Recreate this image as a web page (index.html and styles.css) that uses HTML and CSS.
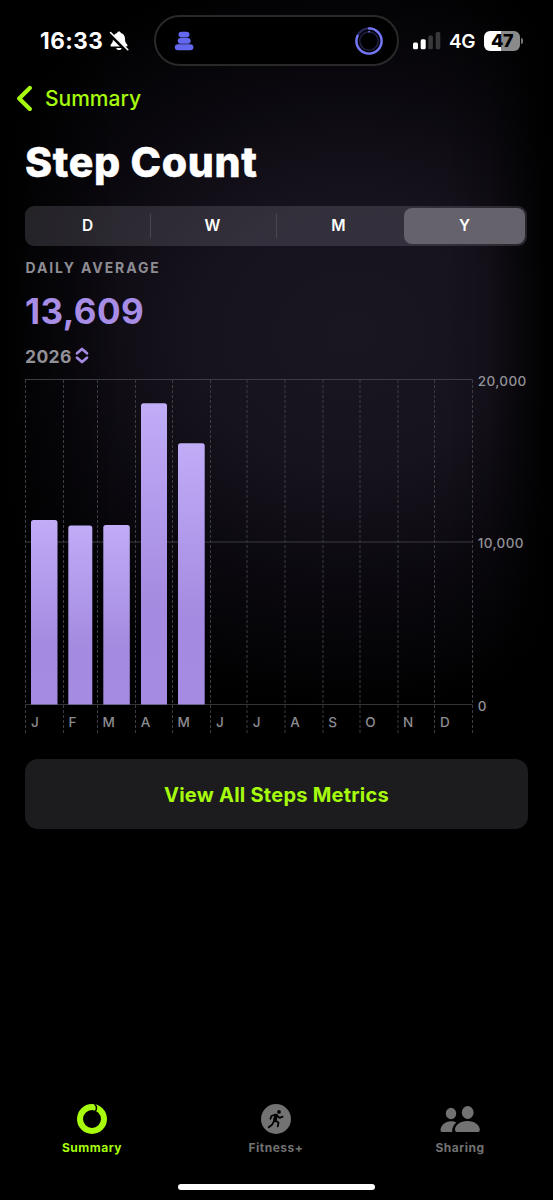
FILE: index.html
```html
<!DOCTYPE html>
<html lang="en">
<head>
<meta charset="utf-8">
<title>Step Count</title>
<link rel="stylesheet" href="styles.css">
</head>
<body>
<div class="screen">
  <header class="status">
    <div class="clock">
      <span class="time">16:33</span>
      <svg class="bell" width="20" height="20" viewBox="0 0 20 20">
        <path d="M10 .5c-1 0-1.800.7-1.900 1.600C5.500 2.900 4 5 4 7.800c0 3.400-.7 4.200-2.100 5.600-.8.8-.5 2.100.8 2.100h14.600c1.300 0 1.600-1.300.8-2.100C16.700 12 16 11.200 16 7.800c0-2.800-1.500-4.900-4.100-5.700C11.800 1.200 11 .5 10 .5zM7.300 16.900h5.400c-.2 1.300-1.300 2.200-2.700 2.200s-2.500-.9-2.700-2.200z" fill="#fff"/>
        <path d="M0 2.200 17.500 19.600" stroke="#000" stroke-width="3.600"/>
        <path d="M1.500 1.500 18.800 18.700" stroke="#fff" stroke-width="1.600" stroke-linecap="round"/>
      </svg>
    </div>
    <div class="island">
      <svg width="20" height="20" viewBox="0 0 20 20" fill="#6468ee">
        <rect x="4.500" y="0.800" width="11" height="5.600" rx="2.800"/>
        <rect x="3.700" y="6.900" width="13" height="5.800" rx="2.900"/>
        <rect x="0.800" y="13.200" width="18.600" height="6" rx="3"/>
      </svg>
      <svg width="28" height="30" viewBox="1 0 28 30" fill="none">
        <circle cx="15" cy="15" r="12.600" stroke="#27275c" stroke-width="2.300"/>
        <circle cx="15" cy="15" r="12.600" stroke="#7476f5" stroke-width="2.400" stroke-dasharray="64.500 80" transform="rotate(-90 15 15)" stroke-linecap="round"/>
        <circle cx="15" cy="15" r="9.300" stroke="#20204a" stroke-width="1.500"/>
        <circle cx="15.200" cy="5.700" r=".9" fill="#7476f5"/>
      </svg>
    </div>
    <div class="signals">
      <svg width="28" height="18" viewBox="0 0 28 18">
        <rect x="0" y="10.500" width="5" height="6.700" rx="1.500" fill="#fff"/>
        <rect x="7.700" y="7.200" width="5" height="10" rx="1.500" fill="#fff"/>
        <rect x="15.300" y="3.500" width="4.600" height="13.700" rx="1.500" fill="#38383a"/>
        <rect x="22.700" y="0" width="4.600" height="17.200" rx="1.500" fill="#38383a"/>
      </svg>
      <span class="network">4G</span>
      <span class="battery">47</span><i class="battery-tip"></i>
    </div>
  </header>

  <nav class="back">
    <svg width="17" height="26" viewBox="0 0 17 26" fill="none" stroke="#a6fc0c" stroke-width="4.200" stroke-linecap="round" stroke-linejoin="round"><path d="M14.800 3 4.200 13.500l10.600 10.500"/></svg>
    <span>Summary</span>
  </nav>

  <main>
    <h1>Step Count</h1>
    <div class="segments">
      <span>D</span><span>W</span><span>M</span><span class="selected">Y</span>
    </div>
    <div class="label">DAILY AVERAGE</div>
    <div class="average">13,609</div>
    <div class="year"><span>2026</span>
      <svg width="14" height="18" viewBox="0 0 14 18" fill="none" stroke="#a58be2" stroke-width="2.700" stroke-linecap="round" stroke-linejoin="round"><path d="M2 6.300 7 2l5 4.300M2 10.700l5 4.300 5-4.300"/></svg>
    </div>

    <svg class="chart" width="528" height="366" viewBox="0 0 528 366">
      <defs>
        <linearGradient id="bar" x1="0" y1="0" x2="0" y2="1">
          <stop offset="0" stop-color="#c0acf7"/><stop offset=".68" stop-color="#a48ae0"/><stop offset="1" stop-color="#a58be2"/>
        </linearGradient>
      </defs>
      <g class="rules">
        <path d="M0 9.500h447.500"/><path d="M0 172h447.500"/><path class="base" d="M0 334.500h447.500"/>
      </g>
      <path class="months" d="M.5 10v355M38.500 10v355M72.500 10v355M110.500 10v355M147.500 10v355M185.500 10v355M222 10v355M260 10v355M298 10v355M335 10v355M373 10v355M409.500 10v355M447.500 10v355"/>
      <g fill="url(#bar)">
        <path d="M6 334.500V152.500q0-2.500 2.500-2.500h21.500q2.500 0 2.500 2.500V334.500z"/>
        <path d="M43.300 334.500V158q0-2.500 2.500-2.500h19q2.500 0 2.500 2.500V334.500z"/>
        <path d="M78.300 334.500V157.500q0-2.500 2.500-2.500h21.500q2.500 0 2.500 2.500V334.500z"/>
        <path d="M116 334.500V35.800q0-2.500 2.500-2.500h21q2.500 0 2.500 2.500V334.500z"/>
        <path d="M153 334.500V75.800q0-2.500 2.500-2.500h21.700q2.500 0 2.500 2.500V334.500z"/>
      </g>
      <g class="axis">
        <text x="6" y="357.300">J</text><text x="43.500" y="357.300">F</text><text x="77.500" y="357.300">M</text><text x="115.800" y="357.300">A</text><text x="152.500" y="357.300">M</text><text x="191" y="357.300">J</text><text x="227.700" y="357.300">J</text><text x="265.300" y="357.300">A</text><text x="303.200" y="357.300">S</text><text x="340.200" y="357.300">O</text><text x="378" y="357.300">N</text><text x="415" y="357.300">D</text>
      </g>
      <g class="values">
        <text x="452.700" y="15.500">20,000</text><text x="452.700" y="178">10,000</text><text x="452.700" y="340.500">0</text>
      </g>
    </svg>

    <button class="metrics">View All Steps Metrics</button>
  </main>

  <footer class="tabs">
    <div class="tab active">
      <svg width="42" height="32" viewBox="0 0 42 32" fill="none">
        <circle cx="21" cy="16" r="12" stroke="#a6fc0c" stroke-width="6"/>
        <path d="M23.500 1Q27.200 4.500 24 9" stroke="#000" stroke-width="1.400"/>
      </svg>
      <span>Summary</span>
    </div>
    <div class="tab">
      <svg width="42" height="32" viewBox="0 0 42 32" fill="none">
        <circle cx="21" cy="16" r="15" fill="#727272"/>
        <g transform="translate(.7 .6)">
          <circle cx="23.300" cy="8.300" r="1.900" fill="#000"/>
          <path d="m20.400 12-1.300 4.800" stroke="#000" stroke-width="3.700" stroke-linecap="round"/>
          <path d="m19.500 11-3.800 1.400-.9 2.800M21.500 12l2.400 2.300 3-1.200M19.500 16.800l3.300 2.200-.7 3.700M18 18l-1.700 3.200-3.300 2.500" stroke="#000" stroke-width="1.800" stroke-linecap="round" stroke-linejoin="round"/>
        </g>
      </svg>
      <span>Fitness+</span>
    </div>
    <div class="tab">
      <svg width="42" height="32" viewBox="0 0 42 32" fill="#727272">
        <ellipse cx="12" cy="10.500" rx="5.200" ry="5.700"/>
        <path d="M1.500 27.300C1.500 22.700 6 18.300 12 18.300c2.100 0 3.900.5 5.300 1.300-2.500 2.200-4.400 5-4.100 9.400H3Q1.500 29 1.500 27.300z"/>
        <ellipse cx="28.700" cy="9.500" rx="5.900" ry="6.500"/>
        <path d="M16 26.700c0-4.200 5-8.600 12.400-8.600s12.400 4.400 12.400 8.600c0 1.700-.8 2.300-2.400 2.300h-20c-1.600 0-2.400-.6-2.400-2.300z"/>
      </svg>
      <span>Sharing</span>
    </div>
  </footer>
  <div class="home"></div>
</div>
</body>
</html>
```
FILE: styles.css
```css
* { box-sizing: border-box; }
body { margin: 0; background: #000; font-family: Inter, "Liberation Sans", sans-serif; }
.screen {
  width: 553px; height: 1200px; overflow: hidden;
  display: flex; flex-direction: column;
  background:
    linear-gradient(90deg, #000 0, rgba(0, 0, 0, .55) 35px, transparent 120px, transparent 445px, rgba(0, 0, 0, .2) 490px, rgba(0, 0, 0, .75) 530px, #000 553px),
    radial-gradient(ellipse 440px 375px at 350px 335px, #191521 0, #17131e 35%, #0a080e 68%, #000 100%),
    #000;
}
svg { display: block; flex: none; }
.status { height: 81px; display: flex; align-items: flex-start; color: #fff; }
.clock { width: 154px; padding: 27px 0 0 40px; display: flex; gap: 4px; }
.time { width: 65px; font-size: 22.500px; line-height: 28px; font-weight: 700; letter-spacing: .5px; white-space: nowrap; }
.bell { margin-top: 4px; }
.island {
  width: 245px; height: 51px; margin-top: 15px; padding: 0 14px 0 18px;
  border: 2px solid #29292a; border-radius: 26px; background: #000;
  display: flex; align-items: center; justify-content: space-between;
}
.signals { display: flex; align-items: center; margin: 27px 0 0 14px; height: 28px; }
.signals svg { margin-top: -1px; }
.network { width: 35px; margin-left: 8px; font-size: 19px; font-weight: 600; letter-spacing: -.3px; }
.battery {
  width: 36px; height: 20px; border-radius: 6px; color: #000;
  background: linear-gradient(90deg, #fff 48%, #8a8a8b 48%);
  font-size: 18px; line-height: 20px; font-weight: 800; text-align: center; letter-spacing: -.4px;
}
.battery-tip { width: 2px; height: 6px; margin-left: 1px; border-radius: 0 2px 2px 0; background: #77777a; }
.back { height: 56px; padding: 4px 0 0 15px; display: flex; gap: 13px; color: #a6fc0c; font-size: 21px; line-height: 28px; font-weight: 500; }
main { padding-left: 25px; height: 963px; }
h1 { margin: 0; height: 68.500px; color: #fff; font-size: 41px; line-height: 50px; font-weight: 800; letter-spacing: .7px; -webkit-text-stroke: .5px #fff; }
.segments { width: 502px; height: 40px; padding: 2px; border-radius: 9px; display: grid; grid-template-columns: 124px 126px 126px 122px; background: rgba(120, 118, 130, .29); }
.segments span { position: relative; padding-right: 3px; color: #fff; font-size: 15.500px; line-height: 36px; font-weight: 600; text-align: center; }
.segments span:nth-child(-n+2)::after { content: ""; position: absolute; right: 0; top: 6px; width: 1px; height: 24px; background: #4a4850; }
.segments .selected { height: 36px; margin-left: 1px; padding-right: 0; border-radius: 8px; background: #65626c; }
.label { height: 42px; padding: 12px 0 0 .5px; color: #8e8d94; font-size: 14px; line-height: 20px; font-weight: 700; letter-spacing: 1.900px; }
.average { height: 56px; color: #a88de6; font-size: 35px; line-height: 46px; font-weight: 700; letter-spacing: .4px; }
.year { height: 26.500px; display: flex; gap: 3px; color: #929197; font-size: 17.500px; line-height: 25px; font-weight: 700; letter-spacing: .4px; }
.year svg { margin-top: 3px; }
.rules path { stroke: #3d3b43; stroke-width: 1; }
.rules .base { stroke: #343437; }
.months { stroke: #3d3c42; stroke-width: 1; stroke-dasharray: 3 2; }
.axis { fill: #8c8c90; font-size: 13.500px; font-weight: 500; }
.values { fill: #929197; font-size: 13.500px; font-weight: 500; letter-spacing: .4px; }
.metrics { display: block; width: 503px; height: 70px; margin: 22.500px 0 0; padding: 3px 0 0; border: 0; border-radius: 13px; background: #1c1c1e; color: #a6fc0c; font: 700 20px Inter, sans-serif; letter-spacing: .25px; }
.tabs { height: 70px; padding-top: 3px; display: grid; grid-template-columns: repeat(3, 184px); }
.tab { display: flex; flex-direction: column; align-items: center; color: #727272; font-size: 12px; line-height: 18px; font-weight: 700; letter-spacing: .5px; }
.tab span { margin-top: 4px; }
.active { color: #a6fc0c; }
.home { width: 197px; height: 6px; margin: 14px 0 0 178px; border-radius: 3px; background: #fff; }
```
